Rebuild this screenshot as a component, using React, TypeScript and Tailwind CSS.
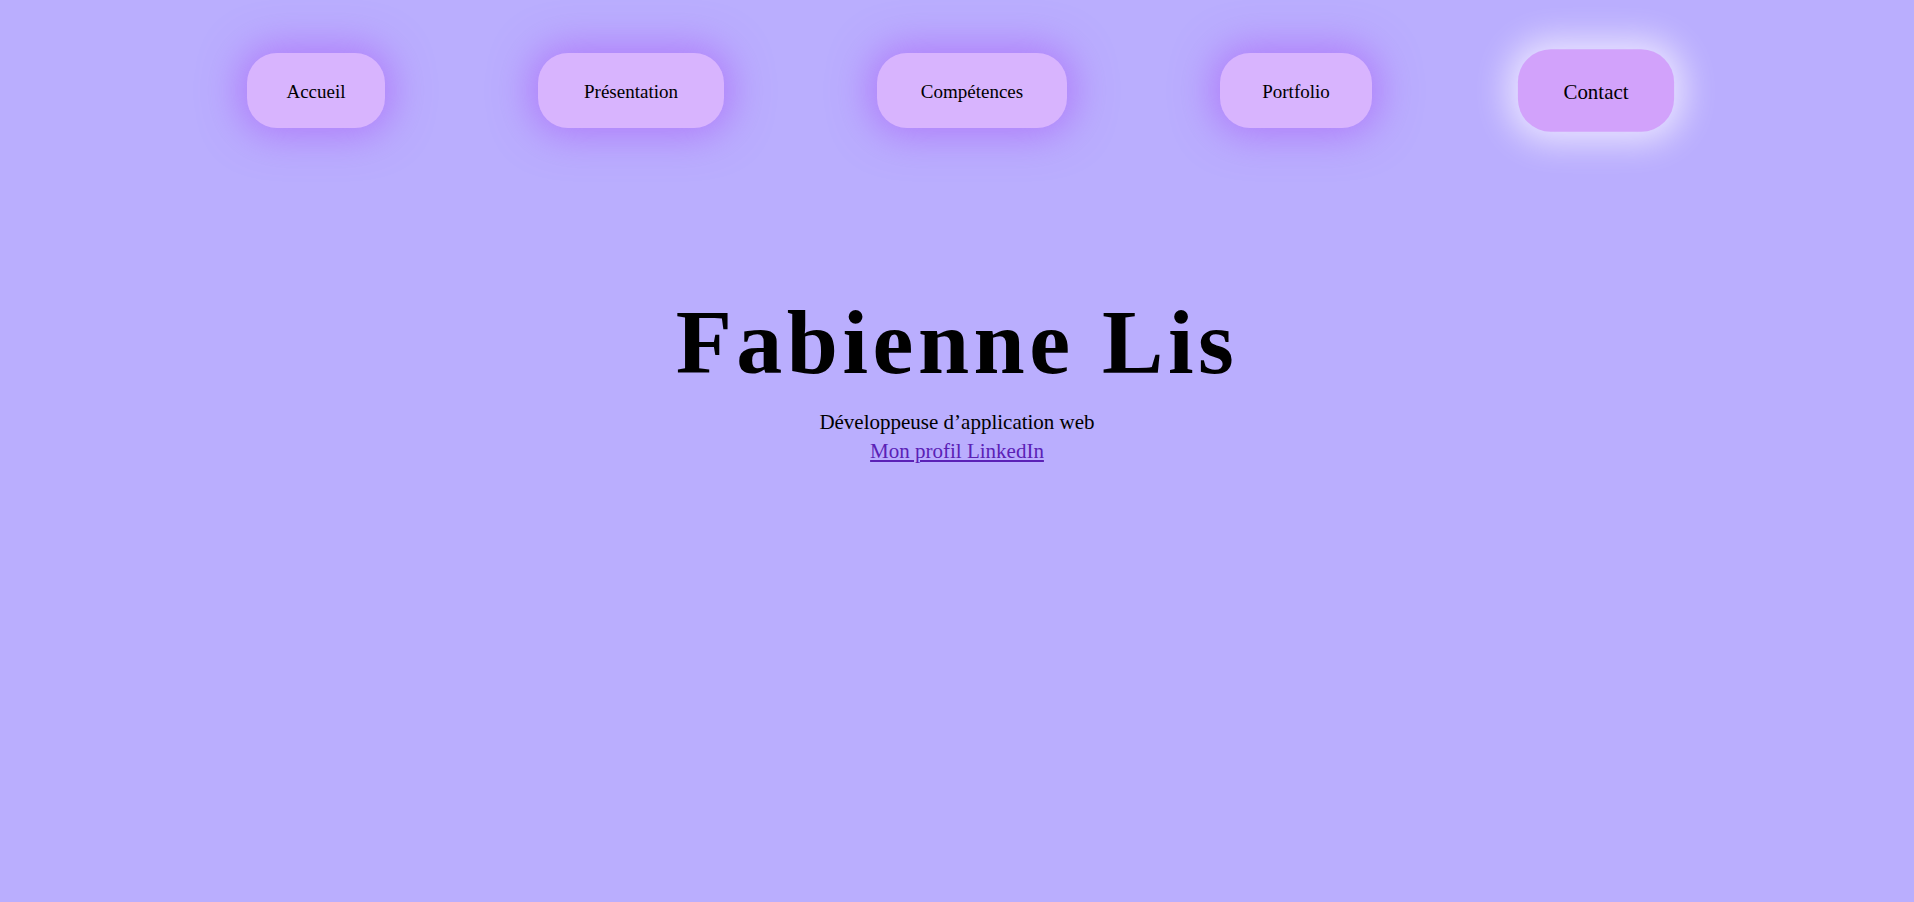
import React from "react";

const links = [
  { label: "Accueil", w: "w-[138px]" },
  { label: "Présentation", w: "w-[186px]" },
  { label: "Compétences", w: "w-[190px]" },
  { label: "Portfolio", w: "w-[152px]" },
];

export default function App() {
  return (
    <main
      className="min-h-screen w-full bg-[#baaefe] text-black"
      style={{ fontFamily: '"Liberation Serif", "DejaVu Serif", serif' }}
    >
      <nav className="pt-[53px]">
        <ul className="flex items-center justify-center gap-[153px]">
          {links.map((link) => (
            <li key={link.label}>
              <a
                href="#"
                className={`${link.w} h-[75px] pt-[4px] flex items-center justify-center rounded-[30px] bg-[#d8b4fe] text-[19px] shadow-[0_0_38px_8px_rgba(168,85,247,0.55)]`}
              >
                {link.label}
              </a>
            </li>
          ))}
          <li>
            <a
              href="#"
              className="w-[142px] h-[75px] pt-[4px] flex items-center justify-center rounded-[30px] bg-[#d2a2fb] text-[19px] scale-110 shadow-[0_0_30px_10px_rgba(240,235,255,0.85)]"
            >
              Contact
            </a>
          </li>
        </ul>
      </nav>

      <section className="flex flex-col items-center mt-[164px]">
        <h1 className="text-[92px] leading-[100px] font-bold tracking-[4.5px]">
          Fabienne Lis
        </h1>
        <p className="mt-[16px] text-[21px] leading-[29px]">
          Développeuse d’application web
        </p>
        <a
          href="#"
          className="text-[21px] leading-[29px] text-[#5b21b6] underline"
        >
          Mon profil LinkedIn
        </a>
      </section>
    </main>
  );
}
